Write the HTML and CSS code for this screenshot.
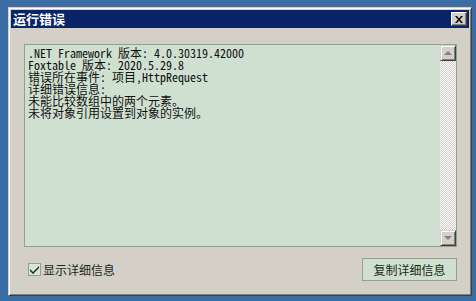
FILE: index.html
```html
<!DOCTYPE html>
<html lang="zh-CN">
<head>
    <meta charset="UTF-8">
    <title>运行错误</title>
    <link rel="stylesheet" href="styles.css">
</head>
<body>
    <div class="window">
        <div class="titlebar">
            <span class="title">运行错误</span>
            <button class="close-btn">
                <svg width="8" height="7" viewBox="0 0 8 7">
                    <path d="M0 0h2l2 2.5L6 0h2L5 3.5 8 7H6L4 4.5 2 7H0l3-3.5z" fill="#000"/>
                </svg>
            </button>
        </div>
        <div class="client">
            <div class="details">
                <pre class="details-text">.NET Framework 版本: 4.0.30319.42000
Foxtable 版本: 2020.5.29.8
错误所在事件: 项目,HttpRequest
详细错误信息:
未能比较数组中的两个元素。
未将对象引用设置到对象的实例。</pre>
                <div class="scrollbar">
                    <div class="scroll-btn"><span class="arrow-up"></span></div>
                    <div class="scroll-track"></div>
                    <div class="scroll-btn"><span class="arrow-down"></span></div>
                </div>
            </div>
            <div class="footer">
                <label class="check">
                    <span class="check-box">
                        <svg width="9" height="8" viewBox="0 0 9 8">
                            <path d="M0 3l3 3 6-6v2L3 8 0 5z" fill="#1a2a1a"/>
                        </svg>
                    </span>
                    显示详细信息
                </label>
                <button class="copy-btn">复制详细信息</button>
            </div>
        </div>
    </div>
</body>
</html>
```

FILE: styles.css
```css
body {
    margin: 0;
    background-color: #3a6ea5;
    font-family: "Noto Sans CJK SC", "Liberation Sans", sans-serif;
    font-size: 12px;
}
.window {
    margin: 7px 0 0 8px;
    width: 464px;
    height: 289px;
    box-sizing: border-box;
    background-color: #d4d0c8;
    border: 1px solid;
    border-color: #d4d0c8 #404040 #404040 #d4d0c8;
    box-shadow: inset 1px 1px #fff, inset -1px -1px #808080;
    padding: 2px;
    display: flex;
    flex-direction: column;
}
.titlebar {
    height: 18px;
    background-color: #0a246a;
    display: flex;
    align-items: center;
    justify-content: space-between;
    padding: 0 2px 0 2px;
}
.title {
    color: #fff;
    font-weight: bold;
    font-size: 13px;
    line-height: 18px;
}
.close-btn {
    width: 16px;
    height: 14px;
    padding: 0;
    background-color: #d4d0c8;
    border: 1px solid;
    border-color: #fff #404040 #404040 #fff;
    box-shadow: inset -1px -1px #808080;
    display: flex;
    align-items: center;
    justify-content: center;
}
.client {
    flex: 1;
    padding: 16px 12px 0 13px;
    display: flex;
    flex-direction: column;
}
.details {
    height: 203px;
    box-sizing: border-box;
    border: 1px solid #8ca48c;
    background-color: #d0e0d0;
    display: flex;
}
.details-text {
    flex: 1;
    margin: 0;
    padding: 2px 3px;
    font-family: "Noto Sans Mono CJK SC", "Liberation Mono", "Noto Sans CJK SC", monospace;
    font-size: 12px;
    line-height: 12px;
    color: #111;
}
.scrollbar {
    width: 16px;
    display: flex;
    flex-direction: column;
}
.scroll-btn {
    height: 16px;
    box-sizing: border-box;
    background-color: #d4d0c8;
    border: 1px solid;
    border-color: #d4d0c8 #404040 #404040 #d4d0c8;
    box-shadow: inset 1px 1px #fff, inset -1px -1px #808080;
    display: flex;
    align-items: center;
    justify-content: center;
}
.arrow-up {
    border: 4px solid transparent;
    border-bottom-color: #808080;
    border-top: 0;
    width: 0;
    height: 0;
}
.arrow-down {
    border: 4px solid transparent;
    border-top-color: #808080;
    border-bottom: 0;
    width: 0;
    height: 0;
}
.scroll-track {
    flex: 1;
    background-color: #fff;
    background-image: conic-gradient(#fff 25%, #d4d0c8 0 50%, #fff 0 75%, #d4d0c8 0);
    background-size: 2px 2px;
}
.footer {
    display: flex;
    align-items: center;
    justify-content: space-between;
    margin-top: 11px;
}
.check {
    display: flex;
    align-items: center;
    gap: 2px;
    margin-left: 4px;
    color: #1a2a1a;
}
.check-box {
    width: 13px;
    height: 13px;
    box-sizing: border-box;
    border: 1px solid #8ca48c;
    background-color: #d8e6d8;
    display: flex;
    align-items: center;
    justify-content: center;
}
.copy-btn {
    width: 95px;
    height: 23px;
    padding: 0;
    border: 1px solid #8ca48c;
    background-color: #d0e0d0;
    font-family: "Noto Sans CJK SC", sans-serif;
    font-size: 12px;
    color: #1a2a1a;
}
```
